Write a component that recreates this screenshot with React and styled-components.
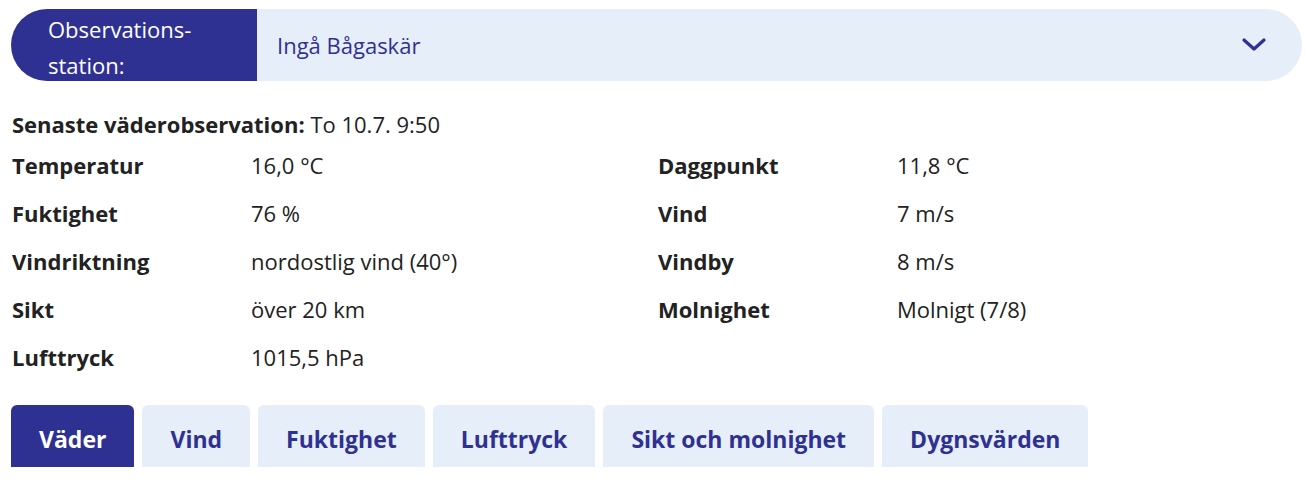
import styled, { createGlobalStyle } from "styled-components";

const GlobalStyle = createGlobalStyle`
  body {
    margin: 0;
    background: #fff;
    font-family: "Open Sans", "Noto Sans", sans-serif;
    color: #222;
  }
`;

const BLUE = "#2f3192";
const LIGHT = "#e6eefa";

const stationer = "Ingå Bågaskär";

const vanster = [
  ["Temperatur", "16,0 °C"],
  ["Fuktighet", "76 %"],
  ["Vindriktning", "nordostlig vind (40°)"],
  ["Sikt", "över 20 km"],
  ["Lufttryck", "1015,5 hPa"],
];

const hoger = [
  ["Daggpunkt", "11,8 °C"],
  ["Vind", "7 m/s"],
  ["Vindby", "8 m/s"],
  ["Molnighet", "Molnigt (7/8)"],
];

const flikar = ["Väder", "Vind", "Fuktighet", "Lufttryck", "Sikt och molnighet", "Dygnsvärden"];

function App() {
  return (
    <>
      <GlobalStyle />
      <Page>
        <StationSelect>
          <SelectLabel>Observations-<br />station:</SelectLabel>
          <SelectValue>
            <span>{stationer}</span>
            <svg width="26" height="16" viewBox="0 0 26 16" fill="none">
              <path d="M3 3 L13 12 L23 3" stroke={BLUE} strokeWidth="3.2" strokeLinecap="round" strokeLinejoin="round" />
            </svg>
          </SelectValue>
        </StationSelect>

        <Latest>
          <b>Senaste väderobservation:</b> To 10.7. 9:50
        </Latest>

        <Columns>
          <Column>
            {vanster.map(([k, v]) => (
              <Row key={k}>
                <Label>{k}</Label>
                <Value>{v}</Value>
              </Row>
            ))}
          </Column>
          <Column>
            {hoger.map(([k, v]) => (
              <Row key={k}>
                <Label>{k}</Label>
                <Value>{v}</Value>
              </Row>
            ))}
          </Column>
        </Columns>

        <Tabs>
          {flikar.map((f, i) => (
            <Tab key={f} $active={i === 0}>{f}</Tab>
          ))}
        </Tabs>
      </Page>
    </>
  );
}

const Page = styled.div`
  padding: 9px 4px 0 11px;
`;

const StationSelect = styled.div`
  display: flex;
  height: 72px;
  border-radius: 36px;
  overflow: hidden;
  background: ${LIGHT};
`;

const SelectLabel = styled.div`
  width: 246px;
  box-sizing: border-box;
  padding: 2px 0 0 37px;
  background: ${BLUE};
  color: #fff;
  font-size: 22px;
  line-height: 36px;
`;

const SelectValue = styled.div`
  flex: 1;
  display: flex;
  align-items: center;
  justify-content: space-between;
  padding: 0 35px 0 20px;
  color: ${BLUE};
  font-size: 22px;
`;

const Latest = styled.div`
  margin-top: 28px;
  margin-left: 1px;
  font-size: 22px;
  line-height: 30px;
  b {
    font-weight: 700;
  }
`;

const Columns = styled.div`
  display: grid;
  grid-template-columns: 646px 1fr;
  margin-left: 1px;
  margin-top: 2px;
`;

const Column = styled.div`
  display: flex;
  flex-direction: column;
`;

const Row = styled.div`
  display: grid;
  grid-template-columns: 239px 1fr;
  height: 48px;
  align-items: center;
  font-size: 22px;
`;

const Label = styled.div`
  font-weight: 700;
`;

const Value = styled.div``;

const Tabs = styled.div`
  display: flex;
  gap: 8px;
  margin-top: 24px;
`;

const Tab = styled.div`
  height: 62px;
  box-sizing: border-box;
  display: flex;
  align-items: center;
  padding: 5px 28px 0;
  border-radius: 6px 6px 0 0;
  background: ${(p) => (p.$active ? BLUE : LIGHT)};
  color: ${(p) => (p.$active ? "#fff" : BLUE)};
  font-size: 23px;
  font-weight: 700;
`;

export default App;
